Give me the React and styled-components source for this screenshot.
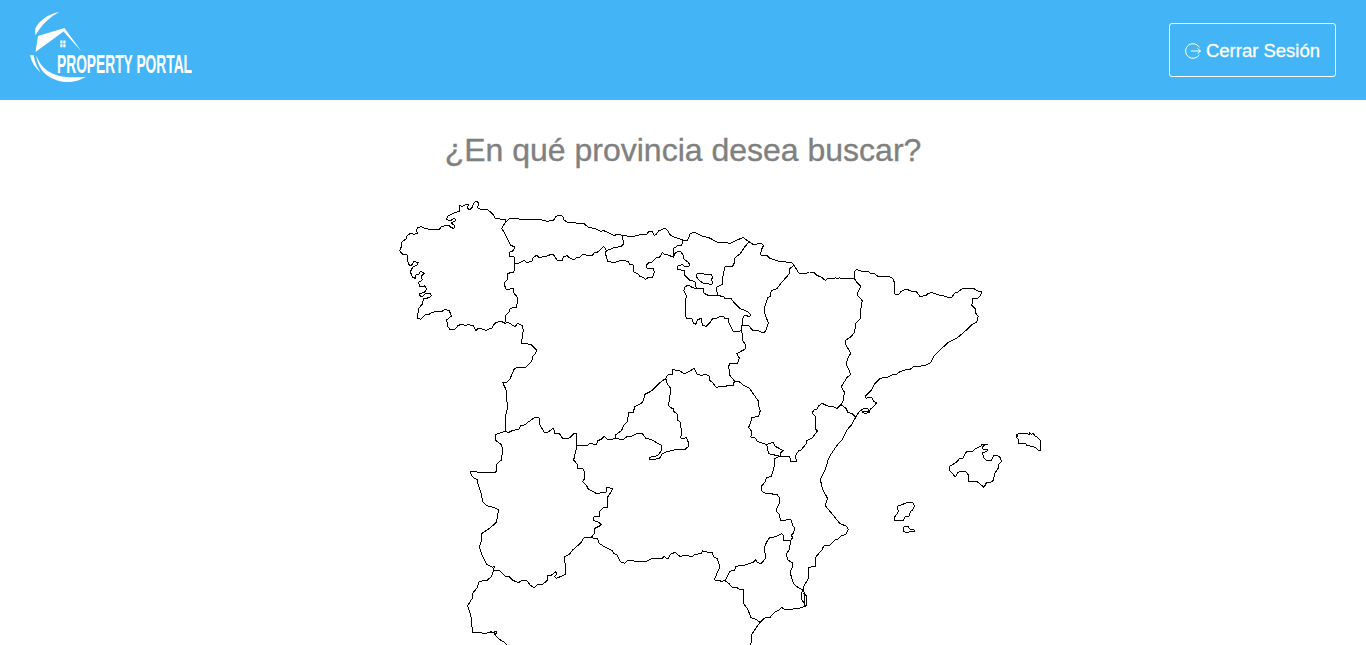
import React from "react";
import styled, { createGlobalStyle } from "styled-components";

const GlobalStyle = createGlobalStyle`
  * { box-sizing: border-box; }
  html, body { margin: 0; height: 100%; overflow: hidden; background: #fff; }
  body { font-family: "Liberation Sans", Arial, sans-serif; }
`;

const Page = styled.div`
  display: flex;
  flex-direction: column;
  height: 100vh;
  overflow: hidden;
`;

const Header = styled.header`
  display: flex;
  flex: none;
  align-items: center;
  justify-content: space-between;
  height: 100px;
  padding: 0 30px 0 20px;
  background: #43b5f6;
`;

const Logo = styled.svg`
  width: 190px;
  height: 100px;
  overflow: visible;
  fill: #fff;
`;

const LogoText = styled.text`
  font-family: "Liberation Sans Narrow", "Liberation Sans", sans-serif;
  font-size: 25px;
  font-weight: 700;
`;

const LogoutButton = styled.button`
  display: flex;
  align-items: center;
  justify-content: center;
  gap: 5px;
  width: 167px;
  height: 54px;
  padding: 1px 0 0;
  border: 1px solid #fff;
  border-radius: 3px;
  background: transparent;
  color: #fff;
  font-family: "Liberation Sans", Arial, sans-serif;
  font-size: 18.5px;
  -webkit-text-stroke: 0.3px #fff;
  white-space: nowrap;
`;

const LogoutGlyph = styled.svg`
  width: 16px;
  height: 16px;
  fill: none;
  stroke: #fff;
  stroke-width: 1;
  stroke-linecap: round;
`;

const Main = styled.main`
  display: flex;
  flex: none;
  flex-direction: column;
  align-items: center;
`;

const Title = styled.h1`
  height: 90px;
  margin: 0;
  color: #808080;
  font-size: 32px;
  font-weight: 400;
  line-height: 100px;
  -webkit-text-stroke: 0.35px #808080;
`;

const Map = styled.svg`
  display: block;
  width: 686px;
  height: 455px;
  fill: none;
  stroke: #000;
  stroke-linejoin: round;
  shape-rendering: crispEdges;
`;

const Border = styled.polyline`
  vector-effect: non-scaling-stroke;
  stroke-width: 1px;
`;

/* Each sheet of the map: its origin and the border lines, three units to a pixel. */
const sheets = [
  { x: 390, y: 190, lines: [
    "346,97 346,88 316,86 311,75 302,66 290,57 275,59 263,54 266,40 260,34 252,38 247,51 238,60 232,54 236,44 225,45 216,50 208,46 208,64 195,68 173,78 170,88 180,93 194,84 197,92 182,99 193,105 192,115 183,113 177,106 155,109 148,118 125,119 105,115 95,110 84,112 79,122 84,130 72,133 62,130 52,136 49,146 36,156 35,168 29,182 37,192 51,195 53,212 58,226 64,226 72,215 85,217 80,226 68,232 61,246 68,262 76,265 78,254 87,252 92,243 103,250 94,258 97,270 86,277 88,288 98,291 105,287 110,298 104,306 88,312 92,321 98,320 108,309 120,310 124,317 117,323 100,327 97,342 86,355 82,385 93,388 105,375 114,375 125,368 140,364 155,365 165,358 178,362 184,378 170,390 174,410 179,418 195,418 204,407 215,402 228,407 236,402 243,407 250,406 258,422 265,414 288,421 306,414 314,400 330,394 345,398",
    "346,97 335,115 343,128 351,145 362,166 375,171 368,183 357,187 358,198 373,201 373,220 374,240 370,247 353,250 352,270 342,278 347,297 357,298 370,294 371,308 383,323 380,352 361,355 357,366 346,378 345,398",
    "346,97 360,85 385,86 390,90 415,87 430,90 450,88",
    "373,220 385,220 402,211 410,218 427,213 427,206 440,195 445,201 450,202",
  ] },
  { x: 540, y: 190, lines: [
    "0,88 7,90 20,94 40,91 47,81 56,75 68,79 72,90 85,98 105,98 112,101 132,101 145,112 166,116 183,124 191,122 222,136 236,133 248,137 258,135 262,139 285,138 300,134 320,133 325,126 336,123 342,136 348,134 357,122 375,115 383,121 392,137 430,151",
    "248,137 250,163 244,169 220,174 200,182 195,187 204,215 220,217 234,215 242,210 264,214 270,223 282,226 282,247 294,251 300,260 310,262 316,269 325,262 338,261 343,247 339,235 321,235 320,224 327,218 337,216 346,205 359,201 367,187 374,194 385,195 400,202 400,176 412,168 425,165 430,151",
    "200,182 191,169 180,180 170,188 163,188 157,197 128,194 117,203 110,202 103,210 87,203 82,197 70,200 68,211 52,211 40,193 33,192 26,197 10,200 0,202",
    "400,202 405,190 415,184 422,184 430,196 431,207 443,215 449,223 446,229 435,230 427,224 414,228 413,239 432,241 435,257 448,270 461,274 466,277 466,287 470,297",
  ] },
  { x: 660, y: 220, lines: [
    "70,61 82,63 90,42 100,37 110,40 130,50 145,52 175,68 194,67 210,70 230,60 250,53 267,65 280,74 302,70 311,76 304,89 302,105 320,106 330,115 355,123 395,128 402,136 416,158 420,160",
    "267,65 251,85 241,101 225,113 225,125 217,141 194,141 187,180 187,193 169,202 173,227",
    "110,207 130,205 132,220 145,226 173,227 190,229 195,235 212,234 225,251 239,265 265,276 273,286 267,289 253,286 247,299 245,330 238,334 220,334 207,310 206,294 195,297 191,290 180,289 170,295 158,296 150,308 138,319 127,315 124,295 113,299 107,313 100,309 96,296 81,296 76,286 76,237 80,230 71,212 75,201 84,195 96,202 110,207",
    "110,161 118,159 132,162 155,164 158,174 153,177 158,188 154,195 146,191 133,192 116,180 110,171 110,161",
    "402,136 390,145 389,160 362,191 351,206 335,211 331,220 331,229 323,234 314,260 315,282 325,309 317,334 308,339 291,330 279,332 267,318 245,316",
    "245,325 248,362 257,374 255,388",
  ] },
  { x: 800, y: 240, lines: [
    "0,101 18,101 28,96 42,97 50,106 64,111 77,122 83,115 100,116 106,113 112,116 118,113 126,116 132,114 145,116 163,115 162,96 170,88 185,94 205,94 213,101 222,100 235,110 265,109 278,115 284,129 285,163 298,162 303,154 318,147 335,154 347,153 360,169 377,167 384,160 397,158 412,164 427,167 442,171 454,174 463,160 473,157 485,147 505,145 522,146 537,155 545,156 541,166 534,174 518,175 519,187 515,195 526,206 528,221 535,229 530,246 516,254 497,272 471,294 445,307 420,330 403,347 391,369 375,376 350,380 340,381 327,390 314,390 300,395 291,402 275,405 261,412 240,415 226,429 214,450 197,468 198,475 210,471 217,475 220,483 230,488 222,499 211,507 207,517 195,522 187,516 200,514 208,517 204,507 193,506 187,508 178,515 167,531",
    "163,115 171,128 182,139 173,158 174,168 187,182 182,209 183,235 167,250 164,276 153,290 138,300 137,313 152,340 144,353 138,373 146,388 152,404 142,411 124,440 133,456 130,481 123,494",
    "167,531 158,522 143,517 139,506 123,494",
  ] },
  { x: 460, y: 320, lines: [
    "133,10 145,7 157,15 165,20 173,10 187,17 190,30 184,70 213,73 230,91 226,101 218,109 215,125 197,142 173,141 162,148 149,179 139,187 128,188 141,215 140,235 143,264 137,286 136,333 145,338 158,331 176,328 181,318 195,314 205,306 225,292 237,294 240,315 253,337 262,338 279,325 284,332 284,342 299,342 308,355 328,354 341,341 349,341 348,357 350,377 383,376 390,370 410,374 412,363 423,358 433,348 444,360 465,356",
    "136,333 107,344 106,360 124,374 128,389 124,420",
    "350,377 347,395 341,420",
  ] },
  { x: 600, y: 350, lines: [
    "46,265 47,255 65,241 72,224 82,215 86,188 101,187 103,171 128,157 135,133 156,122 176,101 197,85 203,75 216,74 218,57 230,62 240,63 252,71 263,67 275,60 282,54 292,73 307,77 312,72 327,77 328,90 337,97 349,113 360,109 400,107 403,93",
    "197,85 202,102 212,115 209,145 205,165 212,173 220,176 221,184 231,192 232,210 241,216 245,253 240,263 252,266 259,261 265,277 265,290 254,299 230,298 195,307 187,311 178,326 149,329 148,322 173,317 183,304 186,286 170,278 155,269 138,265 127,251 107,252 90,261 83,258 70,269 46,265",
    "434,-2 410,11 418,24 412,41 390,40 386,49 389,75 403,93 418,95 430,106 447,113 475,153 475,167 481,181 476,200 455,202 452,217 446,232 456,246 452,261 465,263 473,275 500,284 506,311 541,319 540,309 550,302 541,297 524,288 521,278 512,279 500,284",
  ] },
  { x: 740, y: 390, lines: [
    "348,80 335,104 321,120 305,151 292,165 276,188 265,207 256,239 241,268 247,296 263,326 255,346 270,364 299,400 320,409 325,419 317,433 304,438 291,449 284,450 271,465 251,468 246,480 228,500 228,528 207,532 205,566 192,588 188,602",
    "303,44 291,55 279,49 265,49 246,40 235,48 232,57 221,60 217,69 227,80 228,119 232,123 217,143 201,151 198,162 182,181 177,181 167,196 169,216 153,216 149,199 120,198",
    "120,198 105,205 104,225 94,259 79,263 75,276 65,288 66,304 75,309 112,314 120,326 119,338 108,361 117,373 122,393 149,388 155,391 157,405 164,414 161,428 154,436 158,443 152,452 131,451 131,436 125,431 108,440 88,444 79,458 73,472 77,505 63,521 52,518 47,509 39,517 12,526 0,527",
    "152,452 148,479 139,491 143,510 157,518 157,533 151,544 154,562 160,580 172,591 190,601 185,608 184,628 192,638 194,648 201,647 199,618 190,603",
    "198,648 180,654 137,660 124,652 117,661 105,666 90,682 74,684 60,697",
    "11,599 10,640 23,657 28,670 33,683 46,687 60,697",
    "190,610 194,609 194,639",
  ] },
  { x: 460, y: 460, lines: [
    "124,0 110,13 110,33 104,38 70,37 30,35 36,48 45,56 54,60 54,72 63,98 68,125 81,137 102,143 116,150 109,187 90,204 66,220 64,242 58,262 66,285 80,313 97,322 103,318 101,331 118,331 135,348 147,350 157,360 175,368 186,361 201,363 211,376 222,383 231,375 248,373 261,362 264,346 275,345 288,335 290,344 283,350 290,355 301,350 316,343 317,319 312,292 329,282 338,270 362,249 371,234 394,232 405,218 405,205 424,195 418,188 400,181 402,171 420,170 418,155 428,144 443,143 443,111 452,98 459,86 440,82 438,96 410,101 385,87 378,74 368,65 375,54 373,35 367,24 354,26 351,12 341,0",
    "394,232 403,236 413,235 417,250 430,258 456,271 462,281 472,286 482,306 494,310 503,302 540,304",
    "101,331 94,350 79,363 74,360 57,366 52,383 37,401 38,413 23,437 30,460 35,480 37,517 45,516 61,518 76,521 93,515 108,522 109,513 101,516 107,527 117,537 130,545 141,554",
    "80,517 101,517",
  ] },
  { x: 600, y: 500, lines: [
    "120,184 142,183 154,176 185,176 192,169 203,177 212,162 226,157 239,169 260,166 276,170 282,165 305,159 307,152 323,157 337,157 340,170 351,175 360,200 344,236 346,242 357,241 364,244 375,242 385,222 389,214 404,211 408,199 420,197",
    "375,242 387,251 397,262 408,261 421,269 431,269",
    "480,367 470,381 461,395 453,405 455,425 451,435",
  ] },
  { x: 880, y: 420, lines: [
    "207,147 208,140 231,125 238,116 249,114 259,96 275,96 286,87 302,79 306,73 323,72 312,76 306,84 312,90 323,88 321,94 307,98 311,113 320,121 333,123 341,106 352,106 361,113 364,124 357,132 355,144 345,159 340,181 332,187 320,187 312,202 305,196 293,186 266,186 264,163 257,155 242,153 232,159 227,171 222,166 211,154 207,147",
    "409,44 413,48 408,52 416,58 414,72 423,72 428,69 437,71 441,77 457,79 469,85 477,93 482,91 481,61 473,52 466,49 459,40 454,44 449,38 447,45 442,40 428,42 420,40 409,44",
    "45,302 43,292 52,280 55,273 52,259 65,254 84,247 98,248 104,257 98,270 91,275 87,289 75,291 69,302 59,301 45,302",
    "75,318 84,319 90,327 100,328 104,334 97,336 90,334 80,339 72,335 70,324 75,318",
  ] },
];

function Brand() {
  return (
    <Logo viewBox="20 0 190 100" role="img" aria-label="Property Portal">
      <path d="M35.3 35.5 L35.3 28.5 C39 21 47 14.5 59.3 12 C50 17 42.5 23.5 35.3 35.5Z" />
      <path d="M38 36 L64.5 28 L81.5 51.5 L63.5 31.5 L35.5 52Z" />
      <path d="M30 55.3 L33.8 55.3 C34.3 61 37 67 40.5 72.5 C35 68 31.5 62 30 55.3Z" />
      <path d="M36.3 55.5 C42 70 53 80 86 76.7 C80 80 75 82 66 82 C50 81 38 71 36.3 55.5Z" />
      <path d="M60.3 40.4h2.2v3h-2.2zM63.3 40.4h2.2v3h-2.2zM60.3 44.3h2.2v3h-2.2zM63.3 44.3h2.2v3h-2.2z" />
      <LogoText x="57" y="73" textLength="135" lengthAdjust="spacingAndGlyphs">PROPERTY PORTAL</LogoText>
    </Logo>
  );
}

function LogoutIcon() {
  return (
    <LogoutGlyph viewBox="0 0 16 16" aria-hidden="true">
      <path d="M14.2 4 A7.4 7.4 0 1 0 14.2 12" />
      <path d="M6.3 8h9M13 5.6 15.4 8 13 10.4" />
    </LogoutGlyph>
  );
}

export default function App() {
  return (
    <Page>
      <GlobalStyle />
      <Header>
        <Brand />
        <LogoutButton><LogoutIcon />Cerrar Sesión</LogoutButton>
      </Header>
      <Main>
        <Title>¿En qué provincia desea buscar?</Title>
        <Map viewBox="380 190 686 455" transform="translate(40 0)">
          {sheets.map((sheet) => (
            <g key={`${sheet.x}-${sheet.y}`} transform={`translate(${sheet.x} ${sheet.y}) scale(0.33333)`}>
              {sheet.lines.map((points) => <Border key={points} points={points} />)}
            </g>
          ))}
        </Map>
      </Main>
    </Page>
  );
}
